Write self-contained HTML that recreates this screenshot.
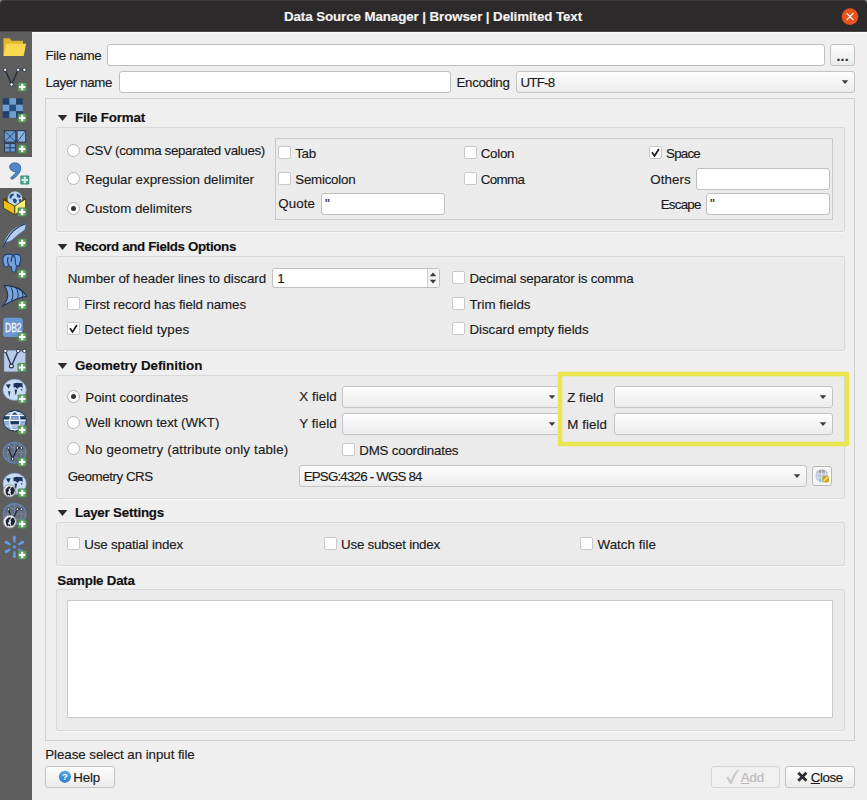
<!DOCTYPE html>
<html><head><meta charset="utf-8"><title>Data Source Manager | Browser | Delimited Text</title>
<style>
html,body{margin:0;padding:0}
body{width:867px;height:800px;position:relative;overflow:hidden;background:#efefef;font-family:"Liberation Sans",sans-serif;font-size:13.33px;color:#1b1b1b}
.abs,.t,.frame,.grp,.sub,.inp,.white,.cmb,.btn,.cb,.rb,.dot,.spinbtn{position:absolute;box-sizing:border-box}
.t{white-space:pre;height:18px;line-height:18px;-webkit-text-stroke:0.15px currentColor}
.b{font-weight:700;color:#111}
#title{position:absolute;left:0;top:0;width:867px;height:31px;background:#2c2a2b;border-radius:4px 4px 0 0;border-top:1px solid #3b3b3b;box-sizing:border-box}
#corner{position:absolute;left:0;top:0;width:867px;height:10px;background:#8a8a8a}
#ttext{position:absolute;left:284px;top:7px;height:18px;line-height:18px;color:#f4f4f4;font-weight:700;white-space:pre}
#side{position:absolute;left:0;top:31px;width:32px;height:769px;background:#5e5e5e}
#tline{position:absolute;left:0;top:31px;width:867px;height:1px;background:#4a4949}
#hl{position:absolute;left:32px;top:32px;width:835px;height:2px;background:#f8f8f8}
#sel{position:absolute;left:0;top:157px;width:32px;height:31px;background:#efefef}
.frame{border:1px solid #cfcfcf;background:#efefef}
.grp{border:1px solid #d9d9d9;background:#ebebeb;border-radius:2px;box-shadow:0 1px 0 #f6f6f6}
.sub{border:1px solid #c9c9c9;background:#ececec}
.inp{border:1px solid #bfbfbf;background:#fff;border-radius:3px}
.white{border:1px solid #c9c9c9;background:#fff}
.cmb{border:1px solid #c4c4c4;border-radius:3px;background:linear-gradient(#fdfdfd,#ececec)}
.btn{border:1px solid #c2c2c2;border-radius:3px;background:linear-gradient(#fdfdfd,#ebebeb)}
.btn.dis{border-color:#d6d6d6;background:#f0f0f0}
.cb{width:13px;height:13px;border:1px solid #c8c8c8;background:#fff;border-radius:2px}
.rb{width:13px;height:13px;border:1px solid #b5b5b5;background:#fff;border-radius:50%}
.dot{width:5px;height:5px;border-radius:50%;background:#333}
.spinbtn{border-left:1px solid #d0d0d0;background:#f3f3f3;border-radius:0 2px 2px 0}
</style></head><body>
<div id="corner"></div>
<div id="title"></div>
<svg class="abs" style="left:841px;top:8px" width="18" height="18" viewBox="0 0 18 18"><circle cx="9" cy="8.6" r="8.3" fill="#e8541e"/><path d="M6 5.6 L12 11.6 M12 5.6 L6 11.6" stroke="#fff" stroke-width="1.300" stroke-linecap="round"/></svg>
<div id="side"></div><div id="hl"></div><div id="tline"></div>
<div id="sel"></div>

<div class="frame" style="left:45px;top:98px;width:810px;height:643px;"></div>
<div class="grp" style="left:56px;top:127px;width:789px;height:105px;"></div>
<div class="grp" style="left:56px;top:256px;width:789px;height:95px;"></div>
<div class="grp" style="left:56px;top:375px;width:789px;height:124px;"></div>
<div class="grp" style="left:56px;top:522px;width:789px;height:44px;"></div>
<div class="grp" style="left:56px;top:589px;width:789px;height:142px;"></div>
<div class="sub" style="left:275px;top:138px;width:558px;height:82px;"></div>
<div class="inp" style="left:107px;top:44px;width:718px;height:22px;"></div>
<div class="inp" style="left:119px;top:71px;width:332px;height:22px;"></div>
<div class="inp" style="left:321px;top:193px;width:124px;height:22px;"></div>
<div class="inp" style="left:696px;top:168px;width:134px;height:22px;"></div>
<div class="inp" style="left:706px;top:193px;width:124px;height:22px;"></div>
<div class="inp" style="left:272px;top:268px;width:168px;height:20px;"></div>
<div class="spinbtn" style="left:427px;top:269px;width:12px;height:18px"></div>
<svg class="abs" style="left:429px;top:270.600px" width="8" height="14" viewBox="0 0 8 14"><path d="M0.8 5.2 L4 1.6 L7.2 5.2 Z M0.8 8.8 L4 12.4 L7.2 8.8 Z" fill="#3a3a3a"/></svg>
<div class="white" style="left:67px;top:600px;width:766px;height:118px;"></div>
<div class="cmb" style="left:516px;top:71px;width:339px;height:22px;"></div><svg class="abs" style="left:841.0px;top:80.0px" width="8" height="5" viewBox="0 0 8 5"><path d="M0.7 0.2 L7.3 0.2 L4 3.9 Z" fill="#3c3c3c"/></svg>
<div class="cmb" style="left:342px;top:386px;width:220px;height:22px;"></div><svg class="abs" style="left:548.0px;top:395.0px" width="8" height="5" viewBox="0 0 8 5"><path d="M0.7 0.2 L7.3 0.2 L4 3.9 Z" fill="#3c3c3c"/></svg>
<div class="cmb" style="left:342px;top:413px;width:220px;height:22px;"></div><svg class="abs" style="left:548.0px;top:422.0px" width="8" height="5" viewBox="0 0 8 5"><path d="M0.7 0.2 L7.3 0.2 L4 3.9 Z" fill="#3c3c3c"/></svg>
<div class="cmb" style="left:614px;top:386px;width:219px;height:22px;"></div><svg class="abs" style="left:819.0px;top:395.0px" width="8" height="5" viewBox="0 0 8 5"><path d="M0.7 0.2 L7.3 0.2 L4 3.9 Z" fill="#3c3c3c"/></svg>
<div class="cmb" style="left:614px;top:413px;width:219px;height:22px;"></div><svg class="abs" style="left:819.0px;top:422.0px" width="8" height="5" viewBox="0 0 8 5"><path d="M0.7 0.2 L7.3 0.2 L4 3.9 Z" fill="#3c3c3c"/></svg>
<div class="cmb" style="left:299px;top:465px;width:508px;height:22px;"></div><svg class="abs" style="left:793.0px;top:474.0px" width="8" height="5" viewBox="0 0 8 5"><path d="M0.7 0.2 L7.3 0.2 L4 3.9 Z" fill="#3c3c3c"/></svg>
<div class="btn" style="left:830px;top:44px;width:25px;height:22px;"></div>
<span class="t b" style="left:836.5px;top:47px;letter-spacing:0.2px;font-size:14px;color:#2a2a2a">...</span>
<div class="btn" style="left:812px;top:466px;width:20px;height:20px;background:#f7f7f7;border-color:#b9b9b9"></div>
<svg class="abs" style="left:814px;top:468px" width="16" height="16" viewBox="0 0 16 16"><linearGradient id="gg" x1="0" y1="0" x2="0" y2="1"><stop offset="0" stop-color="#8e8e90"/><stop offset="0.45" stop-color="#b9c6d6"/><stop offset="1" stop-color="#8fbdec"/></linearGradient><circle cx="7.8" cy="7.8" r="6.4" fill="url(#gg)"/><path d="M1.6 6 H14 M1.8 9.800 H13.800 M7.800 1.400 V14.200 M4.500 2.500 Q2.500 7.800 4.500 13 M11 2.500 Q13 7.800 11 13" stroke="#e9f1fa" stroke-width="0.700" fill="none"/><rect x="8.200" y="7.800" width="6.800" height="6.800" rx="2.200" fill="#c7a91f"/><path d="M10 12.800 L13.200 9.600" stroke="#f6e88a" stroke-width="1.500" stroke-linecap="round"/></svg>
<div class="btn" style="left:45px;top:766px;width:70px;height:22px;"></div>
<div class="btn dis" style="left:711px;top:766px;width:69px;height:22px;"></div>
<div class="btn" style="left:785px;top:766px;width:70px;height:22px;"></div>
<svg class="abs" style="left:58px;top:770px" width="14" height="14" viewBox="0 0 14 14"><linearGradient id="hg" x1="0" y1="0" x2="0" y2="1"><stop offset="0" stop-color="#55a5e6"/><stop offset="1" stop-color="#2c7fcb"/></linearGradient><circle cx="6.900" cy="6.800" r="6.100" fill="url(#hg)"/><text x="6.900" y="10.400" text-anchor="middle" font-family="Liberation Sans, sans-serif" font-weight="700" font-size="9.5" fill="#fff">?</text></svg>
<svg class="abs" style="left:725px;top:768px" width="16" height="17" viewBox="0 0 16 17"><path d="M1.200 9.600 L3.200 8.400 L5.800 12.200 C7.500 7.500 10.500 3.500 13.200 1.200 L14.200 2 C11.500 5.500 8.500 10.500 6.800 16 L5 16 Z" fill="#cbcbcb"/></svg>
<svg class="abs" style="left:796px;top:771px" width="13" height="12" viewBox="0 0 13 12"><path d="M2.300 1.800 L10.400 9.800 M10.400 1.800 L2.300 9.800" stroke="#2e2e2e" stroke-width="2.900" fill="none"/></svg>
<div class="cb" style="left:278px;top:146px"></div>
<div class="cb" style="left:278px;top:172px"></div>
<div class="cb" style="left:464px;top:146px"></div>
<div class="cb" style="left:464px;top:172px"></div>
<div class="cb" style="left:649px;top:146px"></div><svg class="abs" style="left:649px;top:146px" width="13" height="13" viewBox="0 0 13 13"><path d="M3 6.300 L5.500 10 L9.900 3" fill="none" stroke="#1c1c1c" stroke-width="1.700" stroke-linejoin="miter"/></svg>
<div class="cb" style="left:67px;top:297px"></div>
<div class="cb" style="left:67px;top:322px"></div><svg class="abs" style="left:67px;top:322px" width="13" height="13" viewBox="0 0 13 13"><path d="M3 6.300 L5.500 10 L9.900 3" fill="none" stroke="#1c1c1c" stroke-width="1.700" stroke-linejoin="miter"/></svg>
<div class="cb" style="left:452px;top:271px"></div>
<div class="cb" style="left:452px;top:297px"></div>
<div class="cb" style="left:452px;top:322px"></div>
<div class="cb" style="left:342px;top:443px"></div>
<div class="cb" style="left:67px;top:537px"></div>
<div class="cb" style="left:324px;top:537px"></div>
<div class="cb" style="left:580px;top:537px"></div>
<div class="rb" style="left:67.2px;top:143.9px"></div>
<div class="rb" style="left:67.2px;top:172.4px"></div>
<div class="rb" style="left:67.2px;top:201.9px"></div><div class="dot" style="left:71.2px;top:205.9px"></div>
<div class="rb" style="left:67.2px;top:390.4px"></div><div class="dot" style="left:71.2px;top:394.4px"></div>
<div class="rb" style="left:67.2px;top:416.4px"></div>
<div class="rb" style="left:67.2px;top:442.4px"></div>
<svg class="abs" style="left:57px;top:114.3px" width="12" height="8" viewBox="0 0 12 8"><path d="M0.7 1 L10.3 1 L5.5 7 Z" fill="#2a2a2a"/></svg>
<svg class="abs" style="left:57px;top:242.8px" width="12" height="8" viewBox="0 0 12 8"><path d="M0.7 1 L10.3 1 L5.5 7 Z" fill="#2a2a2a"/></svg>
<svg class="abs" style="left:57px;top:361.8px" width="12" height="8" viewBox="0 0 12 8"><path d="M0.7 1 L10.3 1 L5.5 7 Z" fill="#2a2a2a"/></svg>
<svg class="abs" style="left:57px;top:509.3px" width="12" height="8" viewBox="0 0 12 8"><path d="M0.7 1 L10.3 1 L5.5 7 Z" fill="#2a2a2a"/></svg>
<div class="abs" style="left:34px;top:409px;width:1px;height:17px;border-left:1px dotted #d2d2d2"></div>
<div class="abs" style="left:558px;top:372px;width:291px;height:74px;border:4px solid #ebe54f;border-radius:1px;box-shadow:0 0 0 0.5px rgba(235,229,79,.55), inset 0 0 0 0.5px rgba(235,229,79,.55)"></div>
<span class="t" style="left:325px;top:195px">"</span>
<span class="t" style="left:710px;top:195px">"</span>
<svg class="abs" style="left:3px;top:36.25px;overflow:visible" width="24" height="24" viewBox="0 0 24 24"><path d="M0.5 2.3 h6.3 l1.6 2.4 h11.6 v14.8 h-19.5 z" fill="#e2b92e"/>
<path d="M3.3 7.8 h19.8 l-2.4 12.3 h-20.2 z" fill="#fad850"/></svg>
<svg class="abs" style="left:3px;top:67.5px;overflow:visible" width="24" height="24" viewBox="0 0 24 24"><path d="M2.2 1.8 L8.6 16.5 L15.2 1.8" fill="none" stroke="#27303f" stroke-width="1.5" stroke-linejoin="round"/><path d="M15.2 1.8 H21.4" stroke="#27303f" stroke-width="1.1" stroke-dasharray="1.3 0.7"/><circle cx="2.2" cy="1.8" r="1.7" fill="#fff" stroke="#232f42" stroke-width="0.9"/><circle cx="15.2" cy="1.8" r="1.7" fill="#fff" stroke="#232f42" stroke-width="0.9"/><circle cx="21.4" cy="1.8" r="1.7" fill="#fff" stroke="#232f42" stroke-width="0.9"/><circle cx="8.6" cy="16.5" r="1.7" fill="#fff" stroke="#232f42" stroke-width="0.9"/><rect x="14.7" y="14.5" width="9" height="9" rx="1.3" fill="#4f8c53"/><rect x="15.6" y="15.4" width="7.2" height="7.2" rx="0.8" fill="#64a468"/><path d="M19.2 15.8 v6.4 M16.0 19.0 h6.4" stroke="#ffffff" stroke-width="2.1" fill="none"/></svg>
<svg class="abs" style="left:3px;top:98.75px;overflow:visible" width="24" height="24" viewBox="0 0 24 24"><rect x="-0.25" y="-0.75" width="6.7" height="6.55" fill="#1f426b"/><rect x="6.42" y="-0.75" width="6.7" height="6.55" fill="#6e9fd3"/><rect x="13.09" y="-0.75" width="6.7" height="6.55" fill="#1f426b"/><rect x="-0.25" y="5.75" width="6.7" height="6.55" fill="#6e9fd3"/><rect x="6.42" y="5.75" width="6.7" height="6.55" fill="#2b5184"/><rect x="13.09" y="5.75" width="6.7" height="6.55" fill="#6e9fd3"/><rect x="-0.25" y="12.25" width="6.7" height="6.55" fill="#1f426b"/><rect x="6.42" y="12.25" width="6.7" height="6.55" fill="#6e9fd3"/><rect x="13.09" y="12.25" width="6.7" height="6.55" fill="#1f426b"/><rect x="14.7" y="14.5" width="9" height="9" rx="1.3" fill="#4f8c53"/><rect x="15.6" y="15.4" width="7.2" height="7.2" rx="0.8" fill="#64a468"/><path d="M19.2 15.8 v6.4 M16.0 19.0 h6.4" stroke="#ffffff" stroke-width="2.1" fill="none"/></svg>
<svg class="abs" style="left:3px;top:130.0px;overflow:visible" width="24" height="24" viewBox="0 0 24 24"><rect x="1.2" y="0.7" width="11.6" height="11.4" fill="#6a9bd1" stroke="#1f3350" stroke-width="0.9"/>
<path d="M1.2 0.7 L12.8 12.1 M12.8 0.7 L1.2 12.1" stroke="#1f3350" stroke-width="0.8"/>
<rect x="14.1" y="0.7" width="8.6" height="11.4" fill="#8db4e0" stroke="#1f3350" stroke-width="0.9"/>
<path d="M14.1 12.1 L22.7 0.7" stroke="#1f3350" stroke-width="0.8"/>
<rect x="1.2" y="13.3" width="11.6" height="9" fill="#1f3350"/>
<rect x="2" y="14.1" width="4.6" height="3.3" fill="#6a9bd1"/><rect x="7.5" y="14.1" width="4.6" height="3.3" fill="#6a9bd1"/>
<rect x="2" y="18.3" width="4.6" height="3.3" fill="#6a9bd1"/><rect x="7.5" y="18.3" width="4.6" height="3.3" fill="#6a9bd1"/><rect x="14.7" y="14.5" width="9" height="9" rx="1.3" fill="#4f8c53"/><rect x="15.6" y="15.4" width="7.2" height="7.2" rx="0.8" fill="#64a468"/><path d="M19.2 15.8 v6.4 M16.0 19.0 h6.4" stroke="#ffffff" stroke-width="2.1" fill="none"/></svg>
<svg class="abs" style="left:3px;top:161.25px;overflow:visible" width="24" height="24" viewBox="0 0 24 24"><path d="M6.7 5.7 C6.700 3.300 9 1.900 12 1.900 C15.300 1.900 17.700 3.800 17.700 7 C17.700 11.500 13.500 15.800 9.800 18 C8.500 18.800 7.100 17.200 8.200 16.300 C10.500 14.400 12.600 12.600 13.300 10.600 C10 11 6.700 9 6.700 5.700 Z" fill="#4f87c7" stroke="#2f5f98" stroke-width="0.9" stroke-linejoin="round"/><rect x="17.3" y="14.5" width="9" height="9" rx="1.3" fill="#3d8a73"/><rect x="18.2" y="15.4" width="7.2" height="7.2" rx="0.8" fill="#55a58e"/><path d="M21.8 15.8 v6.4 M18.6 19.0 h6.4" stroke="#d4f3ec" stroke-width="2.1" fill="none"/></svg>
<svg class="abs" style="left:3px;top:192.5px;overflow:visible" width="24" height="24" viewBox="0 0 24 24"><path d="M0.400 6.700 L11.800 1 L22.600 5.900 L11.800 13.100 Z" fill="#5e4e12" stroke="#3d3208" stroke-width="0.800" stroke-linejoin="round"/>
<circle cx="12" cy="5.800" r="7.300" fill="#c3d8f3" stroke="#8fb2de" stroke-width="0.500"/>
<path d="M6.500 2.500 q1.500-2 4-2 l.500 1.800 l-2 1.200 l-.500 2 l-2 0 z M13.500 0.500 q3 .5 4.500 3 l-1.500 1.500 l-2.500-1 z M9.500 6 l3-.5 l1.500 2 l-1 3 l-2.500-1 z M15.500 6.500 l2.500-.500 l.800 2.500 l-2 1.500 z" fill="#25508c"/>
<path d="M0.400 6.700 L11.800 13.100 L11.800 21.700 L0.400 15.100 Z" fill="#eebf1b" stroke="#3d3208" stroke-width="0.800" stroke-linejoin="round"/>
<path d="M11.800 13.100 L22.600 5.900 L22.600 14.700 L11.800 21.700 Z" fill="#f6ee7e" stroke="#3d3208" stroke-width="0.800" stroke-linejoin="round"/><rect x="14.7" y="14.5" width="9" height="9" rx="1.3" fill="#4f8c53"/><rect x="15.6" y="15.4" width="7.2" height="7.2" rx="0.8" fill="#64a468"/><path d="M19.2 15.8 v6.4 M16.0 19.0 h6.4" stroke="#ffffff" stroke-width="2.1" fill="none"/></svg>
<svg class="abs" style="left:3px;top:223.75px;overflow:visible" width="24" height="24" viewBox="0 0 24 24"><path d="M22.600 -0.700 C14 1.200 6 7 1.600 16.500 L-0.200 23.200 L0.900 23.400 L3.200 18.200 C5 18.400 8 17.500 11 14.500 C14 11.500 17 9.500 21.800 6 C22.800 4 23 1.500 22.600 -0.700 Z" fill="#b4cff0" stroke="#3a5a86" stroke-width="0.700" stroke-linejoin="round"/>
<path d="M22 0 C14 2.600 7 9 2.500 17.800 L0.200 23.200" fill="none" stroke="#1c2f52" stroke-width="1.100"/><rect x="14.7" y="14.5" width="9" height="9" rx="1.3" fill="#4f8c53"/><rect x="15.6" y="15.4" width="7.2" height="7.2" rx="0.8" fill="#64a468"/><path d="M19.2 15.8 v6.4 M16.0 19.0 h6.4" stroke="#ffffff" stroke-width="2.1" fill="none"/></svg>
<svg class="abs" style="left:3px;top:255.0px;overflow:visible" width="24" height="24" viewBox="0 0 24 24"><path d="M2 -0.600 C0 0.500 -0.500 3.500 0.200 7 C0.800 10 2 11.800 3.400 11.600 C4.600 11.500 5.200 10.500 5.600 9.500 C6.500 11 7.500 11.500 8.400 11.300 L8.800 15 C9.200 17 12.500 17 12.800 15 L13.500 10.200 C14.800 10.500 16.200 10.500 16.800 10 C16.200 9.300 16.500 8.500 17 7 C18 4 18 1 16.500 -0.200 C14.500 -1.500 11.500 -1 10.200 -0.200 C8 -1.300 4.500 -1.600 2 -0.600 Z" fill="#75a2dc" stroke="#23457c" stroke-width="1.200" stroke-linejoin="round" transform="translate(0 0.5)"/>
<path d="M5.200 1.200 C4.200 4 4.600 7.500 5.600 9.500 M10.200 0 C8.500 1.500 8 4 8.200 6.500 M10.200 0 C12 1.500 12.800 5 12.200 8 L13.500 10.200" fill="none" stroke="#23457c" stroke-width="1.100" transform="translate(0 0.5)"/><rect x="14.7" y="14.5" width="9" height="9" rx="1.3" fill="#4f8c53"/><rect x="15.6" y="15.4" width="7.2" height="7.2" rx="0.8" fill="#64a468"/><path d="M19.2 15.8 v6.4 M16.0 19.0 h6.4" stroke="#ffffff" stroke-width="2.1" fill="none"/></svg>
<svg class="abs" style="left:3px;top:286.25px;overflow:visible" width="24" height="24" viewBox="0 0 24 24"><path d="M1 -0.600 C8 -0.600 18 1.500 23.800 10.300 C16 11.500 7 15.500 -0.600 20.400 C5 14.500 7 7.500 1 -0.600 Z" fill="#76a5dc" stroke="#1f3350" stroke-width="1.100" stroke-linejoin="round"/>
<path d="M7.400 0.500 C10.400 5 10.600 11 8.200 15.500 M13 1.800 C15.600 6 15.600 10 14.200 13.100 M18.200 4 C20 7 20.200 9 19.400 11.500" fill="none" stroke="#1f3350" stroke-width="1"/><rect x="14.7" y="14.5" width="9" height="9" rx="1.3" fill="#4f8c53"/><rect x="15.6" y="15.4" width="7.2" height="7.2" rx="0.8" fill="#64a468"/><path d="M19.2 15.8 v6.4 M16.0 19.0 h6.4" stroke="#ffffff" stroke-width="2.1" fill="none"/></svg>
<svg class="abs" style="left:3px;top:317.5px;overflow:visible" width="24" height="24" viewBox="0 0 24 24"><rect x="0.200" y="-0.300" width="19.600" height="19.400" rx="2.800" fill="#6a97d2"/>
<text x="2" y="13.500" font-family="Liberation Sans, sans-serif" font-size="12.500" fill="#eef5ff" stroke="#eef5ff" stroke-width="0.350" textLength="16.600" lengthAdjust="spacingAndGlyphs">DB2</text><rect x="14.7" y="14.5" width="9" height="9" rx="1.3" fill="#4f8c53"/><rect x="15.6" y="15.4" width="7.2" height="7.2" rx="0.8" fill="#64a468"/><path d="M19.2 15.8 v6.4 M16.0 19.0 h6.4" stroke="#ffffff" stroke-width="2.1" fill="none"/></svg>
<svg class="abs" style="left:3px;top:348.75px;overflow:visible" width="24" height="24" viewBox="0 0 24 24"><rect x="1" y="1.300" width="21.600" height="21.500" rx="0.800" fill="#b8cbe8" stroke="#6f7f9b" stroke-width="0.500"/><path d="M2.400 1.900 L8.400 17 L15.200 1.900" fill="none" stroke="#2a3850" stroke-width="1.400" stroke-linejoin="round"/><path d="M15.200 1.900 H21.400" stroke="#2a3850" stroke-width="1" stroke-dasharray="1.300 0.700"/><circle cx="2.4" cy="1.9" r="1.7" fill="#fff" stroke="#232f42" stroke-width="0.9"/><circle cx="15.2" cy="1.9" r="1.7" fill="#fff" stroke="#232f42" stroke-width="0.9"/><circle cx="21.4" cy="1.9" r="1.7" fill="#fff" stroke="#232f42" stroke-width="0.9"/><circle cx="8.4" cy="17" r="1.9" fill="#fff" stroke="#232f42" stroke-width="1.2"/><rect x="14.5" y="14" width="9" height="9" rx="1.3" fill="#4f8c53"/><rect x="15.4" y="14.9" width="7.2" height="7.2" rx="0.8" fill="#64a468"/><path d="M19.0 15.3 v6.4 M15.8 18.5 h6.4" stroke="#ffffff" stroke-width="2.1" fill="none"/></svg>
<svg class="abs" style="left:3px;top:380.0px;overflow:visible" width="24" height="24" viewBox="0 0 24 24"><g transform="translate(0.00 0.00)"><ellipse cx="11.600" cy="9.800" rx="11.600" ry="10.500" fill="#c9dcf3" stroke="#86abdc" stroke-width="0.700"/>
<path d="M2.800 4.600 L7.800 4.200 L6.800 6.200 L5.600 8.800 L4.400 7 Z M5.200 11 L7.400 11.400 L6.800 14 L6.400 17.200 L5.600 14 Z M10.400 3.600 L14 2.800 L19.400 3.200 L19.800 8 L17.800 6.800 L16 7.200 L14.200 9 L12.800 7.200 L10.600 7.400 Z M11.600 9.600 L14.200 9.800 L13.400 13 L13 15.600 L12.200 13.500 Z M17.500 9 L19.500 9.500 L19 11 Z" fill="#1d3159"/></g><rect x="14.7" y="14.5" width="9" height="9" rx="1.3" fill="#4f8c53"/><rect x="15.6" y="15.4" width="7.2" height="7.2" rx="0.8" fill="#64a468"/><path d="M19.2 15.8 v6.4 M16.0 19.0 h6.4" stroke="#ffffff" stroke-width="2.1" fill="none"/></svg>
<svg class="abs" style="left:3px;top:411.25px;overflow:visible" width="24" height="24" viewBox="0 0 24 24"><clipPath id="wc"><ellipse cx="11.7" cy="9.75" rx="11.5" ry="10.300"/></clipPath><ellipse cx="11.7" cy="9.75" rx="11.700" ry="10.500" fill="#1d3a63"/><g clip-path="url(#wc)"><rect x="0" y="0.900" width="24" height="2.700" fill="#b5c6e8"/><rect x="0" y="3.700" width="24" height="1.500" fill="#f1f5fb"/><rect x="7" y="5.300" width="9.400" height="3.100" fill="#7fa3d6"/><rect x="0" y="8.500" width="24" height="1.500" fill="#f1f5fb"/><rect x="0" y="10.100" width="24" height="3.300" fill="#8db0de"/><rect x="7" y="10.100" width="9.400" height="3.300" fill="#1d3a63"/><rect x="0" y="13.500" width="24" height="1.300" fill="#f1f5fb"/><rect x="0" y="14.900" width="24" height="2.900" fill="#a3bde4"/><rect x="0" y="17.900" width="24" height="1" fill="#f1f5fb"/><path d="M11.700 1.200 L14.200 3.600 H9.200 Z" fill="#1d3a63"/></g><ellipse cx="11.799999999999999" cy="9.95" rx="5.100" ry="9.700" fill="none" stroke="#f4f7fc" stroke-width="1.200"/><ellipse cx="11.7" cy="9.75" rx="11.500" ry="10.300" fill="none" stroke="#1d3a63" stroke-width="0.900"/><rect x="14.7" y="14.5" width="9" height="9" rx="1.3" fill="#4f8c53"/><rect x="15.6" y="15.4" width="7.2" height="7.2" rx="0.8" fill="#64a468"/><path d="M19.2 15.8 v6.4 M16.0 19.0 h6.4" stroke="#ffffff" stroke-width="2.1" fill="none"/></svg>
<svg class="abs" style="left:3px;top:442.5px;overflow:visible" width="24" height="24" viewBox="0 0 24 24"><g transform="translate(0.00 0.00)"><ellipse cx="11.600" cy="9.700" rx="11.300" ry="10.300" fill="#666d78" stroke="#5e88c0" stroke-width="1.200"/><path d="M0.500 9.700 H22.800 M2.500 4.300 H20.800 M2.500 15.100 H20.800 M11.600 -0.500 V20 M6.600 0.800 Q2.600 9.700 6.600 18.600 M16.600 0.800 Q20.600 9.700 16.600 18.600" fill="none" stroke="#7d96ba" stroke-width="0.600"/><path d="M5.200 4.900 L9.600 15.900 L14.400 4.900 H18.400" fill="none" stroke="#162238" stroke-width="1.200"/><circle cx="5.2" cy="4.9" r="1.3" fill="#fff" stroke="#162238" stroke-width="0.9"/><circle cx="14.4" cy="4.9" r="1.3" fill="#fff" stroke="#162238" stroke-width="0.9"/><circle cx="18.4" cy="4.9" r="1.3" fill="#fff" stroke="#162238" stroke-width="0.9"/><circle cx="9.6" cy="15.9" r="1.3" fill="#fff" stroke="#162238" stroke-width="0.9"/></g><rect x="14.7" y="14.5" width="9" height="9" rx="1.3" fill="#4f8c53"/><rect x="15.6" y="15.4" width="7.2" height="7.2" rx="0.8" fill="#64a468"/><path d="M19.2 15.8 v6.4 M16.0 19.0 h6.4" stroke="#ffffff" stroke-width="2.1" fill="none"/></svg>
<svg class="abs" style="left:3px;top:473.75px;overflow:visible" width="24" height="24" viewBox="0 0 24 24"><g transform="translate(0.00 -0.05)"><ellipse cx="11.600" cy="9.800" rx="11.600" ry="10.500" fill="#c9dcf3" stroke="#86abdc" stroke-width="0.700"/>
<path d="M2.800 4.600 L7.800 4.200 L6.800 6.200 L5.600 8.800 L4.400 7 Z M5.200 11 L7.400 11.400 L6.800 14 L6.400 17.200 L5.600 14 Z M10.400 3.600 L14 2.800 L19.400 3.200 L19.800 8 L17.800 6.800 L16 7.200 L14.200 9 L12.800 7.200 L10.600 7.400 Z M11.600 9.600 L14.200 9.800 L13.400 13 L13 15.600 L12.200 13.500 Z M17.500 9 L19.500 9.500 L19 11 Z" fill="#1d3159"/></g><circle cx="6.6" cy="16.85" r="6.2" fill="#ececf1" stroke="#8f8f98" stroke-width="0.900"/>
<path d="M2.60 15.35 l2.500-2.500 l2 -.500 l.500 1.500 l-2 1.500 l.500 1.500 l-1.500 1.500 l1 2 l-1 1.500 q-2.500-2-2-6.500 z M7.10 15.35 l2-2.500 l2 1 l.800 3 l-1.500 3.500 l-2 1 l-1-2.500 l.500-2 z M5.60 19.85 l1.500 0 l0 2 l-1.500-.500 z" fill="#1c2436"/><rect x="14.7" y="14.5" width="9" height="9" rx="1.3" fill="#4f8c53"/><rect x="15.6" y="15.4" width="7.2" height="7.2" rx="0.8" fill="#64a468"/><path d="M19.2 15.8 v6.4 M16.0 19.0 h6.4" stroke="#ffffff" stroke-width="2.1" fill="none"/></svg>
<svg class="abs" style="left:3px;top:505.0px;overflow:visible" width="24" height="24" viewBox="0 0 24 24"><g transform="translate(0.00 -0.70)"><ellipse cx="11.600" cy="9.700" rx="11.300" ry="10.300" fill="#666d78" stroke="#5e88c0" stroke-width="1.200"/><path d="M0.500 9.700 H22.800 M2.500 4.300 H20.800 M2.500 15.100 H20.800 M11.600 -0.500 V20 M6.600 0.800 Q2.600 9.700 6.600 18.600 M16.600 0.800 Q20.600 9.700 16.600 18.600" fill="none" stroke="#7d96ba" stroke-width="0.600"/><path d="M5.200 4.900 L9.600 15.900 L14.400 4.900 H18.400" fill="none" stroke="#162238" stroke-width="1.200"/><circle cx="5.2" cy="4.9" r="1.3" fill="#fff" stroke="#162238" stroke-width="0.9"/><circle cx="14.4" cy="4.9" r="1.3" fill="#fff" stroke="#162238" stroke-width="0.9"/><circle cx="18.4" cy="4.9" r="1.3" fill="#fff" stroke="#162238" stroke-width="0.9"/><circle cx="9.6" cy="15.9" r="1.3" fill="#fff" stroke="#162238" stroke-width="0.9"/></g><circle cx="6.8" cy="16.6" r="6.5" fill="#ececf1" stroke="#8f8f98" stroke-width="0.900"/>
<path d="M2.80 15.10 l2.500-2.500 l2 -.500 l.500 1.500 l-2 1.500 l.500 1.500 l-1.500 1.500 l1 2 l-1 1.500 q-2.500-2-2-6.500 z M7.30 15.10 l2-2.500 l2 1 l.800 3 l-1.500 3.500 l-2 1 l-1-2.500 l.500-2 z M5.80 19.60 l1.500 0 l0 2 l-1.500-.500 z" fill="#1c2436"/><rect x="14.7" y="14.5" width="9" height="9" rx="1.3" fill="#4f8c53"/><rect x="15.6" y="15.4" width="7.2" height="7.2" rx="0.8" fill="#64a468"/><path d="M19.2 15.8 v6.4 M16.0 19.0 h6.4" stroke="#ffffff" stroke-width="2.1" fill="none"/></svg>
<svg class="abs" style="left:3px;top:536.25px;overflow:visible" width="24" height="24" viewBox="0 0 24 24"><path transform="translate(11.4 10.95) rotate(0)" d="M-1.600 -10.300 Q0 -11.900 1.600 -10.300 L1 -4.600 Q0 -3.700 -1 -4.600 Z" fill="#6f9fdf" stroke="#4b78b8" stroke-width="0.500"/><path transform="translate(11.4 10.95) rotate(60)" d="M-1.600 -10.300 Q0 -11.900 1.600 -10.300 L1 -4.600 Q0 -3.700 -1 -4.600 Z" fill="#6f9fdf" stroke="#4b78b8" stroke-width="0.500"/><path transform="translate(11.4 10.95) rotate(120)" d="M-1.600 -10.300 Q0 -11.900 1.600 -10.300 L1 -4.600 Q0 -3.700 -1 -4.600 Z" fill="#6f9fdf" stroke="#4b78b8" stroke-width="0.500"/><path transform="translate(11.4 10.95) rotate(180)" d="M-1.600 -10.300 Q0 -11.900 1.600 -10.300 L1 -4.600 Q0 -3.700 -1 -4.600 Z" fill="#6f9fdf" stroke="#4b78b8" stroke-width="0.500"/><path transform="translate(11.4 10.95) rotate(240)" d="M-1.600 -10.300 Q0 -11.900 1.600 -10.300 L1 -4.600 Q0 -3.700 -1 -4.600 Z" fill="#6f9fdf" stroke="#4b78b8" stroke-width="0.500"/><path transform="translate(11.4 10.95) rotate(300)" d="M-1.600 -10.300 Q0 -11.900 1.600 -10.300 L1 -4.600 Q0 -3.700 -1 -4.600 Z" fill="#6f9fdf" stroke="#4b78b8" stroke-width="0.500"/><circle cx="11.4" cy="10.95" r="1.600" fill="#6f9fdf" stroke="#4b78b8" stroke-width="0.500"/><rect x="14.7" y="14.5" width="9" height="9" rx="1.3" fill="#4f8c53"/><rect x="15.6" y="15.4" width="7.2" height="7.2" rx="0.8" fill="#64a468"/><path d="M19.2 15.8 v6.4 M16.0 19.0 h6.4" stroke="#ffffff" stroke-width="2.1" fill="none"/></svg>
<span class="t b" style="left:284.0px;top:7.7px;letter-spacing:-0.087px;color:#f3f3f3">Data Source Manager | Browser | Delimited Text</span>
<span class="t" style="left:45.4px;top:46.8px;letter-spacing:-0.270px">File name</span>
<span class="t" style="left:45.4px;top:73.8px;letter-spacing:-0.379px">Layer name</span>
<span class="t" style="left:456.5px;top:73.8px;letter-spacing:-0.322px">Encoding</span>
<span class="t" style="left:520.5px;top:73.8px;letter-spacing:-0.793px">UTF-8</span>
<span class="t b" style="left:75.0px;top:108.8px;letter-spacing:-0.168px">File Format</span>
<span class="t" style="left:85.3px;top:142.2px;letter-spacing:-0.329px">CSV (comma separated values)</span>
<span class="t" style="left:85.3px;top:170.8px;letter-spacing:-0.007px">Regular expression delimiter</span>
<span class="t" style="left:85.3px;top:200.2px;letter-spacing:0.003px">Custom delimiters</span>
<span class="t" style="left:295.3px;top:144.8px;letter-spacing:-0.367px">Tab</span>
<span class="t" style="left:295.3px;top:170.8px;letter-spacing:-0.248px">Semicolon</span>
<span class="t" style="left:480.7px;top:144.8px;letter-spacing:-0.246px">Colon</span>
<span class="t" style="left:480.7px;top:170.8px;letter-spacing:-0.611px">Comma</span>
<span class="t" style="left:666.0px;top:144.8px;letter-spacing:-0.759px">Space</span>
<span class="t" style="left:278.3px;top:195.2px;letter-spacing:0.077px">Quote</span>
<span class="t" style="left:650.3px;top:170.8px;letter-spacing:0.067px">Others</span>
<span class="t" style="left:660.7px;top:195.5px;letter-spacing:-0.745px">Escape</span>
<span class="t b" style="left:75.0px;top:237.5px;letter-spacing:-0.344px">Record and Fields Options</span>
<span class="t" style="left:67.7px;top:270.0px;letter-spacing:-0.052px">Number of header lines to discard</span>
<span class="t" style="left:277.3px;top:270.0px;letter-spacing:-2.722px">1</span>
<span class="t" style="left:84.3px;top:295.5px;letter-spacing:-0.098px">First record has field names</span>
<span class="t" style="left:84.3px;top:321.0px;letter-spacing:0.154px">Detect field types</span>
<span class="t" style="left:469.4px;top:269.8px;letter-spacing:-0.184px">Decimal separator is comma</span>
<span class="t" style="left:469.4px;top:295.5px;letter-spacing:0.012px">Trim fields</span>
<span class="t" style="left:469.4px;top:320.8px;letter-spacing:-0.040px">Discard empty fields</span>
<span class="t b" style="left:75.0px;top:356.5px;letter-spacing:-0.004px">Geometry Definition</span>
<span class="t" style="left:85.3px;top:388.5px;letter-spacing:0.000px">Point coordinates</span>
<span class="t" style="left:85.3px;top:414.2px;letter-spacing:-0.061px">Well known text (WKT)</span>
<span class="t" style="left:85.3px;top:440.5px;letter-spacing:0.153px">No geometry (attribute only table)</span>
<span class="t" style="left:67.7px;top:468.2px;letter-spacing:-0.447px">Geometry CRS</span>
<span class="t" style="left:299.3px;top:388.2px;letter-spacing:0.050px">X field</span>
<span class="t" style="left:299.3px;top:415.2px;letter-spacing:0.084px">Y field</span>
<span class="t" style="left:567.2px;top:388.5px;letter-spacing:-0.014px">Z field</span>
<span class="t" style="left:567.2px;top:415.5px;letter-spacing:0.091px">M field</span>
<span class="t" style="left:359.3px;top:441.5px;letter-spacing:-0.216px">DMS coordinates</span>
<span class="t" style="left:303.7px;top:468.2px;letter-spacing:-0.812px">EPSG:4326 - WGS 84</span>
<span class="t b" style="left:75.0px;top:503.8px;letter-spacing:-0.204px">Layer Settings</span>
<span class="t" style="left:84.3px;top:535.5px;letter-spacing:-0.165px">Use spatial index</span>
<span class="t" style="left:341.0px;top:535.5px;letter-spacing:-0.203px">Use subset index</span>
<span class="t" style="left:597.5px;top:535.5px;letter-spacing:0.047px">Watch file</span>
<span class="t b" style="left:57.3px;top:572.2px;letter-spacing:-0.238px">Sample Data</span>
<span class="t" style="left:45.3px;top:745.5px;letter-spacing:-0.065px">Please select an input file</span>
<span class="t" style="left:73.3px;top:768.5px;letter-spacing:-0.180px">Help</span>
<span class="t" style="left:740.7px;top:768.8px;letter-spacing:-0.140px;color:#b9b9b9"><u>A</u>dd</span>
<span class="t" style="left:810.7px;top:768.8px;letter-spacing:-0.416px"><u>C</u>lose</span>
</body></html>
